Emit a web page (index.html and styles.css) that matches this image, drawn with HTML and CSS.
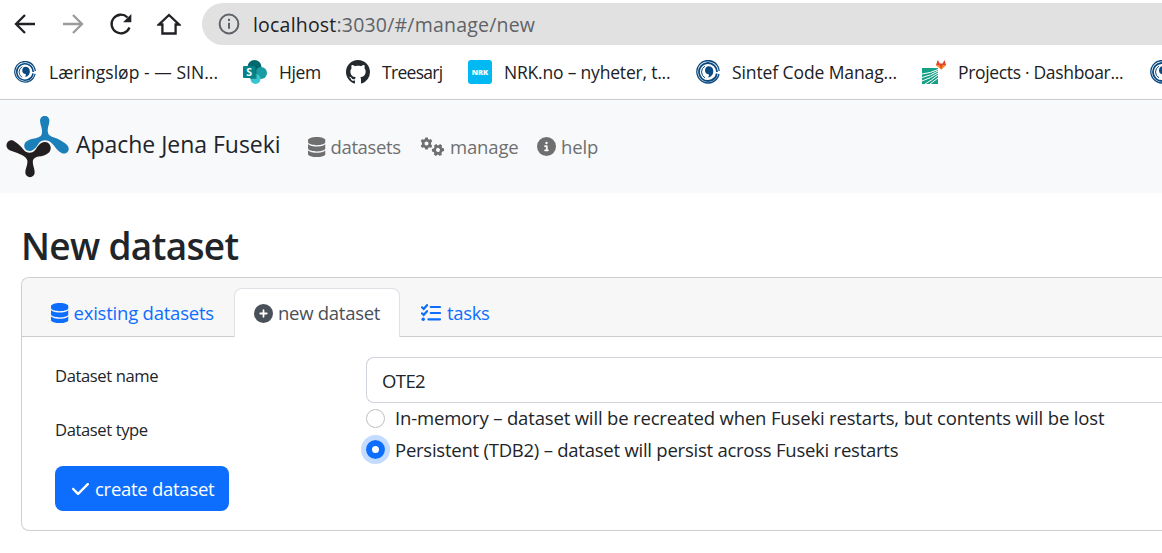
FILE: index.html
```html
<!DOCTYPE html>
<html lang="en">
<head>
<meta charset="utf-8">
<title>Apache Jena Fuseki</title>
<link rel="stylesheet" href="styles.css">
</head>
<body>
<svg class="defs" aria-hidden="true">
  <symbol id="database" viewBox="0 0 448 512"><path d="M448 80v48c0 44.200-100.300 80-224 80S0 172.200 0 128V80C0 35.800 100.300 0 224 0S448 35.800 448 80zM393.200 214.700c20.800-7.400 39.900-16.900 54.800-28.600V288c0 44.200-100.300 80-224 80S0 332.200 0 288V186.100c14.900 11.800 34 21.200 54.800 28.600C99.700 230.700 159.500 240 224 240s124.300-9.300 169.200-25.300zM0 346.100c14.900 11.800 34 21.200 54.800 28.600C99.700 390.700 159.500 400 224 400s124.300-9.300 169.200-25.300c20.800-7.400 39.900-16.900 54.800-28.600V432c0 44.200-100.300 80-224 80S0 476.200 0 432V346.100z"/></symbol>
  <symbol id="gear" viewBox="-8 -8 16 16"><path fill-rule="evenodd" d="M-1.500-7.500h3l.5 2 1.500.8 2-.7 1.600 2.700-1.500 1.500v2.400l1.500 1.500-1.600 2.700-2-.7-1.500.8-.5 2h-3l-.5-2-1.500-.8-2 .7-1.600-2.700 1.500-1.500v-2.400l-1.500-1.500 1.600-2.700 2 .7 1.500-.8zM0-2.500a2.500 2.500 0 1 0 0 5a2.500 2.500 0 1 0 0-5z"/></symbol>
  <symbol id="sintef" viewBox="0 0 24 24"><g fill="none" stroke="#0b4a80"><path stroke-width="1.300" d="M21 5A11.200 11.200 0 1 0 23 14M23.200 11A11.200 11.200 0 0 0 9 1.200M21.500 18A11.200 11.200 0 0 1 13 23.200"/><path stroke-width="1.800" d="M18 5.300A9 9 0 1 0 18.500 18.200M21 12A9 9 0 0 0 12 3M20.800 13.500A9 9 0 0 1 14 20.800"/><path stroke-width="1" d="M9 17.800A6.600 6.600 0 0 1 9 6.200"/></g><path fill="#0b4a80" d="M12.500 6.300c2.800 0 4.800 1.900 4.800 4.900 0 3.500-2.500 6-5.300 6.300.9-1.300 1.200-2.400.7-3.300-2.200 0-3.700-1.600-3.700-3.800 0-2.300 1.500-4.100 3.500-4.100z"/></symbol>
</svg>

<div class="toolbar">
  <svg class="tool" viewBox="0 0 24 24"><path d="M22 12H3M12 3l-9 9 9 9"/></svg>
  <svg class="tool off" viewBox="0 0 24 24"><path d="M2 12h19M12 3l9 9-9 9"/></svg>
  <svg class="tool" viewBox="0 0 24 24"><path d="M20.500 15.500A9.300 9.300 0 1 1 18.500 5.500"/><path class="solid" d="M22.300 2v8.200h-8.200z"/></svg>
  <svg class="tool" viewBox="0 0 24 24"><path d="M2 12.500h3.400V21.500h13.200V12.500H22L12 3z"/></svg>
  <div class="address">
    <svg class="info" viewBox="0 0 22 22"><circle cx="11" cy="11" r="9.400"/><path d="M11 9.700v6M11 5.700v2.200"/></svg>
    <span class="url"><b>localhost</b>:3030/#/manage/new</span>
  </div>
</div>

<div class="bookmarks">
  <div class="mark m1"><svg class="small"><use href="#sintef"/></svg><span>Læringsløp - — SIN...</span></div>
  <div class="mark m2"><svg viewBox="0 0 24 24"><circle cx="11.500" cy="7" r="7" fill="#03686d"/><circle cx="18" cy="13" r="6" fill="#1a9ba1"/><circle cx="12.500" cy="19" r="5" fill="#37c6d0"/><path fill="#024d51" opacity=".5" d="M5 6h8.500v13H7z"/><rect y="6" width="12.500" height="12" rx="1" fill="#038387"/><text x="6.200" y="15.800" class="sp">S</text></svg><span>Hjem</span></div>
  <div class="mark m3"><svg viewBox="0 0 16 16"><path fill="#24292e" d="M8 0C3.580 0 0 3.580 0 8c0 3.540 2.290 6.530 5.470 7.590.4.070.55-.17.55-.38 0-.19-.01-.82-.01-1.490-2.010.37-2.530-.49-2.690-.94-.09-.23-.48-.94-.82-1.130-.28-.15-.68-.52-.01-.53.63-.01 1.080.58 1.230.82.72 1.210 1.870.87 2.330.66.070-.52.280-.87.510-1.070-1.780-.2-3.640-.89-3.640-3.950 0-.87.310-1.590.820-2.150-.08-.2-.36-1.020.080-2.120 0 0 .67-.21 2.200.82.640-.18 1.320-.27 2-.27.680 0 1.360.090 2 .27 1.530-1.040 2.200-.82 2.200-.82.440 1.100.160 1.920.080 2.120.510.560.820 1.270.820 2.150 0 3.070-1.870 3.750-3.650 3.950.290.250.540.730.540 1.480 0 1.070-.01 1.930-.01 2.200 0 .21.150.46.550.38A8.013 8.013 0 0 0 16 8c0-4.420-3.580-8-8-8z"/></svg><span>Treesarj</span></div>
  <div class="mark m4"><svg viewBox="0 0 24 24"><rect width="24" height="24" rx="3" fill="#00b9f2"/><text x="12" y="14.800" class="nrk" textLength="16.500" lengthAdjust="spacingAndGlyphs">NRK</text></svg><span>NRK.no – nyheter, t...</span></div>
  <div class="mark m5"><svg><use href="#sintef"/></svg><span>Sintef Code Manag...</span></div>
  <div class="mark m6"><svg viewBox="0 0 24 24"><path fill="#16a085" d="M0 8h16v16H0z"/><path stroke="#fff" stroke-width="1" fill="none" d="M0 14Q9 13 16 9.500M0 17.500Q9 15.500 16 11M0 21Q9 18 16 13M3 24Q10 20 16 15M8 24Q12 21 16 18"/><path fill="#e24329" d="M14 5l1.800-5 2 3.500h2.800L22.500 0 24 5l-4.800 4.500z"/><path fill="#fc8b26" d="M14 5l4 .2 1.200 4.300zM24 5l-3.700.2-1.100 4.300z"/></svg><span>Projects · Dashboar...</span></div>
  <div class="mark m7"><svg viewBox="0 0 12 24"><use href="#sintef" width="24" height="24"/></svg></div>
</div>

<nav class="navbar">
  <svg class="logo" viewBox="0 0 64 62"><path fill="#1b7fb9" d="M34 4.500a4.700 4.700 0 0 1 9.400 0C43.400 8.500 41.500 11 41.700 15C42 19 44 20 48 21.500C53 23 57 25.500 60 28C66 33 61 39.500 55.500 37C51 34.500 49.500 31 46 27.500C42.500 23.500 36 23 33 27C30.500 31 28 34.500 24 35C17.500 35.500 16.500 27.500 21 25C25 22.600 29 23 32.500 21.300C35.500 20 36 18.500 36 15C36 11 34 8.500 34 4.500z"/><path fill="#231f20" d="M19.300 56.500a4.700 4.700 0 0 0 9.400 0C28.700 52.500 26.800 50 26.800 46C27 42.500 29 41.500 32.500 40.600C36 40 40 39.500 43 36.500C47 32 43.500 25 38 26C34 26.800 32 30 29.800 33.200C27 37.500 21 38 17.800 34C14.500 29.500 11 27 7.500 24.700C2.500 22.500-1.500 28.500 1.500 32.500C4 35.500 8.500 35.500 12 37.200C15.500 39 20.500 40.500 21.300 44.500C22 49 19.300 52 19.300 56.500z"/></svg>
  <span class="brand">Apache Jena Fuseki</span>
  <a class="link l1"><svg class="db"><use href="#database"/></svg><span>datasets</span></a>
  <a class="link l2"><svg class="gears" viewBox="0 0 25 20"><use href="#gear" x="0" y="0" width="13" height="13"/><use href="#gear" x="11.500" y="6.500" width="13" height="13" transform="rotate(30 18 13)"/></svg><span>manage</span></a>
  <a class="link l3"><svg class="round" viewBox="0 0 512 512"><path d="M256 512A256 256 0 1 0 256 0a256 256 0 1 0 0 512zM216 336h24V272H216c-13.300 0-24-10.700-24-24s10.700-24 24-24h48c13.300 0 24 10.700 24 24v88h8c13.300 0 24 10.700 24 24s-10.700 24-24 24H216c-13.300 0-24-10.700-24-24s10.700-24 24-24zm40-208a32 32 0 1 1 0 64 32 32 0 1 1 0-64z"/></svg><span>help</span></a>
</nav>

<main>
  <h1>New dataset</h1>
  <section class="card">
    <div class="tabs">
      <a class="tab t1"><svg class="db"><use href="#database"/></svg><span>existing datasets</span></a>
      <a class="tab active"><svg class="round" viewBox="0 0 512 512"><path d="M256 512A256 256 0 1 0 256 0a256 256 0 1 0 0 512zM232 344V280H168c-13.300 0-24-10.700-24-24s10.700-24 24-24h64V168c0-13.300 10.700-24 24-24s24 10.700 24 24v64h64c13.300 0 24 10.700 24 24s-10.700 24-24 24H280v64c0 13.300-10.700 24-24 24s-24-10.700-24-24z"/></svg><span>new dataset</span></a>
      <a class="tab t3"><svg class="tasks" viewBox="0 0 20 18"><path d="M1 3.300l1.700 1.700L6 1.200M1 9.300l1.700 1.700L6 7.200M9.800 3h9.200M9.800 9h9.200M7.400 15.300H19"/><circle cx="2.200" cy="15.300" r="1.700"/></svg><span>tasks</span></a>
    </div>
    <form class="form">
      <div class="labels">
        <label class="label">Dataset name</label>
        <label class="label">Dataset type</label>
        <button type="button" class="create"><svg class="check" viewBox="0 0 448 512"><path d="M438.600 105.400c12.500 12.500 12.500 32.800 0 45.300l-256 256c-12.500 12.500-32.800 12.500-45.300 0l-128-128c-12.500-12.500-12.500-32.800 0-45.300s32.800-12.500 45.300 0L160 338.700 393.400 105.400c12.500-12.500 32.800-12.500 45.300 0z"/></svg><span>create dataset</span></button>
      </div>
      <div class="fields">
        <div class="input"><span>OTE2</span></div>
        <div class="option"><i class="radio"></i><span class="o1">In-memory – dataset will be recreated when Fuseki restarts, but contents will be lost</span></div>
        <div class="option"><i class="radio on"></i><span class="o2">Persistent (TDB2) – dataset will persist across Fuseki restarts</span></div>
      </div>
    </form>
  </section>
</main>
</body>
</html>
```
FILE: styles.css
```css
* { box-sizing: border-box; }
body {
  margin: 0;
  height: 553px;
  overflow: hidden;
  background: #fff;
  color: #212529;
  font: 18.500px/30px "Open Sans", "Noto Sans", sans-serif;
  letter-spacing: -.22px;
  white-space: nowrap;
}
svg { display: block; flex: none; fill: currentColor; }
.defs { position: absolute; width: 0; height: 0; }

.toolbar { display: flex; align-items: flex-start; height: 48px; padding: 3px 0 0 13px; }
.tool { width: 24px; height: 24px; margin: 9px 24px 0 0; color: #202124; }
.tool path { fill: none; stroke: currentColor; stroke-width: 2.300; }
.tool .solid { fill: currentColor; stroke: none; }
.tool.off { color: #9b9b9b; }
.address { display: flex; flex: 1; align-items: center; height: 42px; margin-left: -3px; padding-left: 16px; border-radius: 21px 0 0 21px; background: #e1e1e1; }
.info { width: 22px; height: 22px; margin-right: 13px; }
.info * { fill: none; stroke: #5f6368; stroke-width: 2; }
.url { padding-top: 1px; color: #5f6368; font-size: 19.500px; letter-spacing: .2px; }
.url b { color: #202124; font-weight: 400; }

.bookmarks { display: flex; height: 52px; padding: 0 0 4px 14px; border-bottom: 1px solid #cbcbcb; color: #202124; font-size: 17.500px; }
.mark { display: flex; flex: none; align-items: center; gap: 12px; }
.mark svg { width: 24px; height: 24px; }
.mark .small { width: 22px; height: 22px; margin-right: 1px; }
.mark.m7 svg { width: 12px; }
.m1 { width: 229px; letter-spacing: .04px; }
.m2 { width: 103px; letter-spacing: -.4px; }
.m3 { width: 122px; letter-spacing: -.7px; }
.m4 { width: 228px; letter-spacing: -.2px; }
.m5 { width: 226px; letter-spacing: -.1px; }
.m6 { width: 228px; letter-spacing: -.33px; }
.sp { fill: #fff; font: 700 10.500px "Open Sans", sans-serif; letter-spacing: 0; text-anchor: middle; }
.nrk { fill: #fff; font: 800 7.500px "Open Sans", sans-serif; letter-spacing: 0; text-anchor: middle; }

.navbar { display: flex; align-items: center; height: 93px; padding-left: 6px; background: #f8f9fb; }
.logo { width: 64px; height: 62px; margin-right: 6px; }
.brand { width: 232px; padding-bottom: 5px; font-size: 23px; letter-spacing: -.03px; }
.link { display: flex; align-items: center; gap: 5px; color: #6f6f6f; }
.db { width: 17.500px; height: 20px; }
.gears { width: 25px; height: 20px; }
.round { width: 19px; height: 19px; }
.l1 { width: 112px; letter-spacing: -.36px; }
.l2 { width: 117px; letter-spacing: -.15px; }
.l3 { letter-spacing: -.1px; }

main { padding: 29px 0 0 21px; }
h1 { margin: 0 0 7px; font-size: 37px; font-weight: 600; line-height: 48px; letter-spacing: -.65px; }
.card { height: 254px; border: 1px solid #cfcfd1; border-right: 0; border-radius: 8px 0 0 8px; }
.tabs { display: flex; align-items: flex-end; height: 59px; padding-left: 12px; border-bottom: 1px solid #cbcccd; border-radius: 7px 0 0 0; background: #f7f7f7; }
.tab { display: flex; flex: none; align-items: center; gap: 5px; height: 49px; margin-bottom: -1px; padding-left: 17px; color: #0d6efd; }
.t1 { width: 200px; }
.active { width: 166px; padding-left: 19px; border: 1px solid #dee2e6; border-bottom: 0; border-radius: 8px 8px 0 0; background: #fff; color: #495057; letter-spacing: -.27px; }
.t3 { gap: 6px; padding-left: 21px; letter-spacing: -.35px; }
.tasks { width: 20px; height: 18px; }
.tasks path { fill: none; stroke: currentColor; stroke-width: 2.200; stroke-linecap: round; }

.form { display: flex; margin: 0; padding: 20px 0 0 33px; }
.labels { display: flex; flex-direction: column; align-items: flex-start; width: 311px; }
.label { height: 54px; padding-top: 4px; font-size: 16.600px; letter-spacing: -.4px; }
.create { display: flex; align-items: center; gap: 6px; width: 174px; height: 45px; margin-top: 1px; padding: 0 0 0 17px; border: 0; border-radius: 8px; background: #0d6efd; color: #fff; font: inherit; letter-spacing: -.27px; }
.check { width: 17px; height: 20px; }
.fields { flex: 1; }
.input { display: flex; align-items: center; height: 46px; padding: 1px 0 0 15px; border: 1px solid #ced4da; border-right: 0; border-radius: 8px 0 0 8px; letter-spacing: -.6px; }
.option { display: flex; align-items: center; gap: 10px; height: 32px; }
.option:nth-child(2) { margin-top: -1px; }
.o1 { letter-spacing: -.165px; }
.o2 { letter-spacing: -.24px; }
.radio { width: 19px; height: 19px; border: 1px solid #bfbfbf; border-radius: 50%; }
.radio.on { margin-top: -1px; border: 6px solid #0d6efd; box-shadow: 0 0 0 5px #c2dbfe; }
```
